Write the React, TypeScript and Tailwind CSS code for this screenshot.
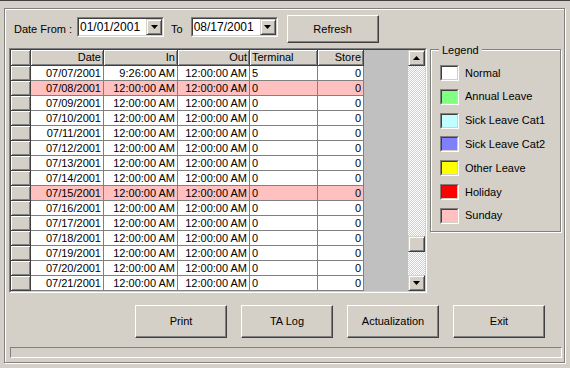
import React from 'react'

type Row = { date: string; inT: string; out: string; term: string; store: string; sunday?: boolean }

const rows: Row[] = [
  { date: '07/07/2001', inT: '9:26:00 AM', out: '12:00:00 AM', term: '5', store: '0' },
  { date: '07/08/2001', inT: '12:00:00 AM', out: '12:00:00 AM', term: '0', store: '0', sunday: true },
  { date: '07/09/2001', inT: '12:00:00 AM', out: '12:00:00 AM', term: '0', store: '0' },
  { date: '07/10/2001', inT: '12:00:00 AM', out: '12:00:00 AM', term: '0', store: '0' },
  { date: '07/11/2001', inT: '12:00:00 AM', out: '12:00:00 AM', term: '0', store: '0' },
  { date: '07/12/2001', inT: '12:00:00 AM', out: '12:00:00 AM', term: '0', store: '0' },
  { date: '07/13/2001', inT: '12:00:00 AM', out: '12:00:00 AM', term: '0', store: '0' },
  { date: '07/14/2001', inT: '12:00:00 AM', out: '12:00:00 AM', term: '0', store: '0' },
  { date: '07/15/2001', inT: '12:00:00 AM', out: '12:00:00 AM', term: '0', store: '0', sunday: true },
  { date: '07/16/2001', inT: '12:00:00 AM', out: '12:00:00 AM', term: '0', store: '0' },
  { date: '07/17/2001', inT: '12:00:00 AM', out: '12:00:00 AM', term: '0', store: '0' },
  { date: '07/18/2001', inT: '12:00:00 AM', out: '12:00:00 AM', term: '0', store: '0' },
  { date: '07/19/2001', inT: '12:00:00 AM', out: '12:00:00 AM', term: '0', store: '0' },
  { date: '07/20/2001', inT: '12:00:00 AM', out: '12:00:00 AM', term: '0', store: '0' },
  { date: '07/21/2001', inT: '12:00:00 AM', out: '12:00:00 AM', term: '0', store: '0' },
]

const legend = [
  { label: 'Normal', color: 'bg-white' },
  { label: 'Annual Leave', color: 'bg-[#80ff80]' },
  { label: 'Sick Leave Cat1', color: 'bg-[#c0ffff]' },
  { label: 'Sick Leave Cat2', color: 'bg-[#8080ff]' },
  { label: 'Other Leave', color: 'bg-[#ffff00]' },
  { label: 'Holiday', color: 'bg-[#ff0000]' },
  { label: 'Sunday', color: 'bg-[#ffc0c0]' },
]

function Arrow({ up }: { up?: boolean }) {
  return (
    <svg width="7" height="4" viewBox="0 0 7 4">
      <polygon points={up ? '3.5,0 7,4 0,4' : '0,0 7,0 3.5,4'} fill="#000" />
    </svg>
  )
}

// petit bouton de barre de défilement / combo
function SmallBtn({ up, className = '' }: { up?: boolean; className?: string }) {
  return (
    <div
      className={`flex items-center justify-center bg-[#d4d0c8] border border-[#d4d0c8] border-r-[#404040] border-b-[#404040] shadow-[inset_1px_1px_0_#ffffff,inset_-1px_-1px_0_#808080] ${className}`}
    >
      <Arrow up={up} />
    </div>
  )
}

function Button({ label, className = '' }: { label: string; className?: string }) {
  return (
    <div
      className={`flex items-center justify-center border border-white border-r-[#404040] border-b-[#404040] shadow-[inset_-1px_-1px_0_#808080] ${className}`}
    >
      {label}
    </div>
  )
}

function DateBox({ value }: { value: string }) {
  return (
    <div className="mt-[2px] w-[87px] h-[20px] border border-[#808080] border-r-white border-b-white">
      <div className="flex h-full items-center bg-white border border-[#404040] border-r-[#d4d0c8] border-b-[#d4d0c8]">
        <span className="flex-1 pl-[1px] leading-[16px] text-[12px]">{value}</span>
        <SmallBtn className="w-[16px] h-[16px]" />
      </div>
    </div>
  )
}

const hdr =
  'h-[16px] bg-[#d4d0c8] border-r border-b border-[#404040] shadow-[inset_1px_1px_0_#ffffff,inset_-1px_-1px_0_#808080] px-[2px] leading-[15px]'

export default function App() {
  return (
    <div className="w-[570px] h-[368px] overflow-hidden bg-[#d4d0c8] border-t border-[#404040] font-['Liberation_Sans',Arial,sans-serif] text-[11px] text-black">
      <div className="mt-[7px] ml-[4px] w-[561px] h-[355px] border border-[#808080] shadow-[inset_1px_1px_0_#ffffff,1px_1px_0_#ffffff] pl-[4px] pt-[6px]">
        {/* ligne des dates */}
        <div className="ml-[5px] flex items-start h-[28px]">
          <span className="w-[63px] mt-[8px] leading-[13px]">Date From :</span>
          <DateBox value="01/01/2001" />
          <span className="ml-[7px] mt-[8px] leading-[13px]">To</span>
          <div className="ml-[8px]">
            <DateBox value="08/17/2001" />
          </div>
          <Button label="Refresh" className="ml-[9px] w-[92px] h-[28px]" />
        </div>

        <div className="mt-[5px] flex items-start">
          {/* grille */}
          <div className="w-[418px] h-[245px] border border-[#808080] border-r-white border-b-white">
            <div className="flex h-full border border-[#404040] border-r-[#d4d0c8] border-b-[#d4d0c8]">
              <div className="flex-1 bg-[#c0c0c0]">
                <div className="grid w-fit grid-cols-[20px_73px_74px_72px_68px_46px]">
                  <div className={hdr} />
                  <div className={`${hdr} text-right`}>Date</div>
                  <div className={`${hdr} text-right`}>In</div>
                  <div className={`${hdr} text-right`}>Out</div>
                  <div className={`${hdr} text-left`}>Terminal</div>
                  <div className={`${hdr} text-right`}>Store</div>
                  {rows.map((r) => {
                    const bg = r.sunday ? 'bg-[#ffc0c0]' : 'bg-white'
                    const cell = `h-[15px] ${bg} border-r border-b border-[#808080] px-[2px] leading-[14px] whitespace-nowrap`
                    return (
                      <React.Fragment key={r.date}>
                        <div className="h-[15px] bg-[#d4d0c8] border-r border-b border-[#404040] shadow-[inset_1px_1px_0_#ffffff,inset_-1px_-1px_0_#808080]" />
                        <div className={`${cell} text-right`}>{r.date}</div>
                        <div className={`${cell} text-right`}>{r.inT}</div>
                        <div className={`${cell} text-right`}>{r.out}</div>
                        <div className={`${cell} text-left`}>{r.term}</div>
                        <div className={`${cell} text-right`}>{r.store}</div>
                      </React.Fragment>
                    )
                  })}
                </div>
              </div>
              <div className="flex w-[17px] flex-col">
                <SmallBtn up className="h-[16px] shrink-0" />
                <div className="flex-1 bg-[image:repeating-conic-gradient(#d4d0c8_0_25%,#ffffff_0_50%)] bg-[length:2px_2px]" />
                <div className="h-[16px] shrink-0 bg-[#d4d0c8] border border-[#d4d0c8] border-r-[#404040] border-b-[#404040] shadow-[inset_1px_1px_0_#ffffff,inset_-1px_-1px_0_#808080]" />
                <div className="h-[23px] shrink-0 bg-[image:repeating-conic-gradient(#d4d0c8_0_25%,#ffffff_0_50%)] bg-[length:2px_2px]" />
                <SmallBtn className="h-[16px] shrink-0" />
              </div>
            </div>
          </div>

          {/* légende */}
          <div className="relative ml-[3px] mt-[1px] w-[131px] h-[183px] border border-[#808080] shadow-[inset_1px_1px_0_#ffffff,1px_1px_0_#ffffff] pl-[9px] pt-[15px]">
            <span className="absolute -top-[7px] left-[8px] bg-[#d4d0c8] px-[3px] leading-[14px]">Legend</span>
            <div className="flex h-[159px] flex-col justify-between">
              {legend.map((l) => (
                <div key={l.label} className="flex items-center gap-[6px]">
                  <div className="w-[19px] h-[16px] border border-[#808080] border-r-white border-b-white">
                    <div className={`h-full ${l.color} border border-[#404040] border-r-[#d4d0c8] border-b-[#d4d0c8]`} />
                  </div>
                  <span className="leading-[13px]">{l.label}</span>
                </div>
              ))}
            </div>
          </div>
        </div>

        {/* boutons */}
        <div className="mt-[12px] ml-[126px] flex gap-[14px]">
          <Button label="Print" className="w-[92px] h-[33px]" />
          <Button label="TA Log" className="w-[92px] h-[33px]" />
          <Button label="Actualization" className="w-[92px] h-[33px]" />
          <Button label="Exit" className="w-[92px] h-[33px]" />
        </div>

        {/* barre d'état */}
        <div className="mt-[9px] ml-[1px] w-[552px] h-[11px] border border-[#808080] border-r-white border-b-white" />
      </div>
    </div>
  )
}
